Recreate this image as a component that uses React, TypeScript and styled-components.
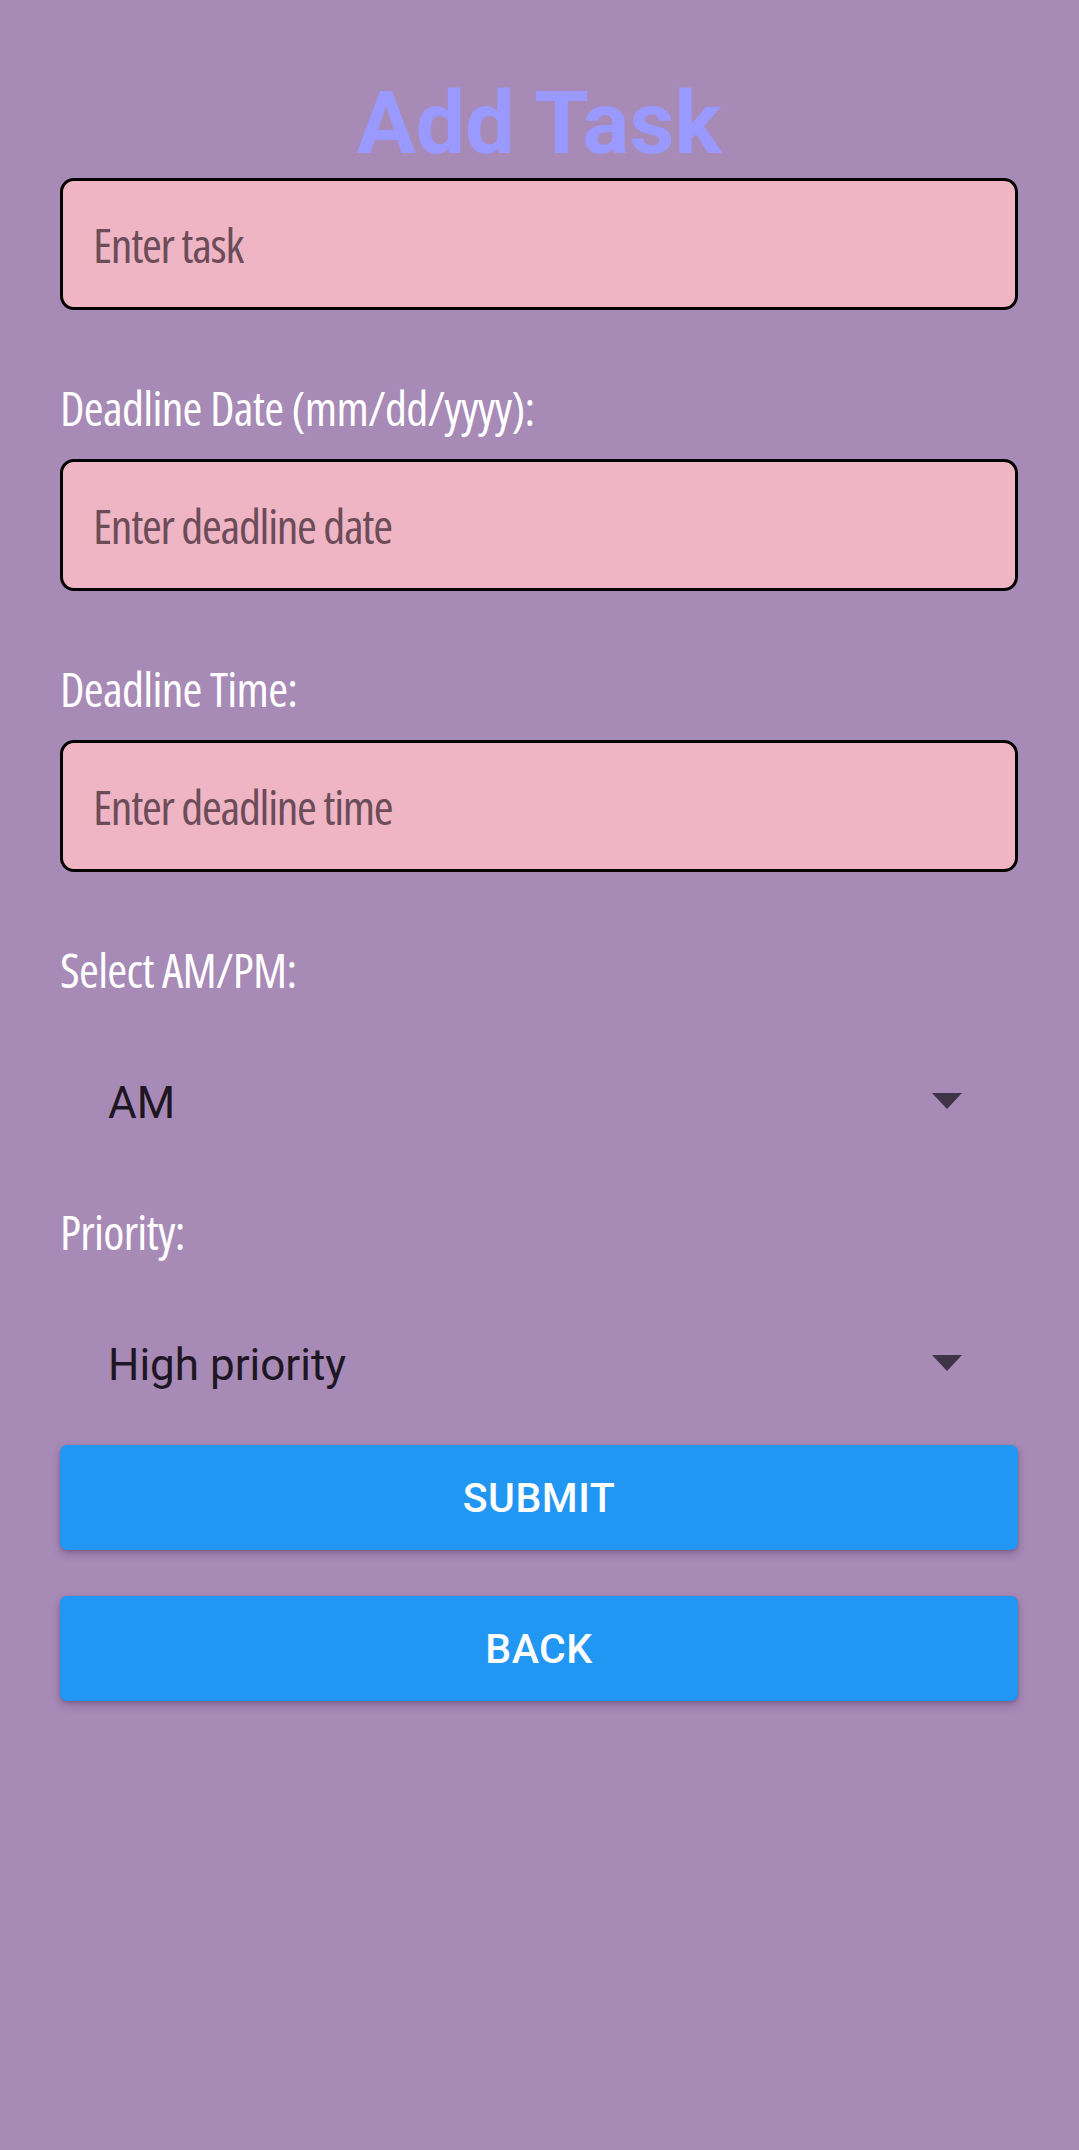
import React from "react";
import styled, { createGlobalStyle } from "styled-components";

const GlobalStyle = createGlobalStyle`
  html, body {
    margin: 0;
    padding: 0;
    background: #a78ab6;
  }
  body {
    min-height: 2150px;
    font-family: Roboto, "Liberation Sans", sans-serif;
  }
`;

const condensed = `"Open Sans", "Roboto Condensed", "DejaVu Sans Condensed", sans-serif`;

const Screen = styled.div`
  box-sizing: border-box;
  min-height: 2150px;
  background: #a78ab6;
  padding: 0 61px 0 60px;
  display: flex;
  flex-direction: column;
`;

const Title = styled.h1`
  margin: 79px 0 11px;
  font-family: Roboto, "Liberation Sans", sans-serif;
  font-weight: 700;
  font-size: 88px;
  line-height: 88px;
  color: #9999ff;
  text-align: center;
`;

const Field = styled.input`
  box-sizing: border-box;
  width: 100%;
  height: 132px;
  margin: 0;
  padding: 0 30px;
  border: 3px solid #000;
  border-radius: 14px;
  background: #efb5c5;
  font-family: ${condensed};
  font-stretch: 75%;
  font-size: 48px;
  letter-spacing: -1.3px;
  color: #3a2a32;
  outline: none;
  &::placeholder {
    color: #6b4c58;
    opacity: 1;
  }
`;

const Label = styled.label<{ $gap: number }>`
  display: block;
  margin: ${(p) => p.$gap}px 0 24px;
  font-family: ${condensed};
  font-stretch: 75%;
  font-weight: 500;
  font-size: 48px;
  letter-spacing: -0.7px;
  line-height: 54px;
  color: #ffffff;
`;

const Picker = styled.div`
  box-sizing: border-box;
  height: 150px;
  margin-top: 7px;
  padding: 0 56px 0 48px;
  display: flex;
  align-items: center;
  justify-content: space-between;
  cursor: pointer;
`;

const PickerValue = styled.span`
  font-family: Roboto, "Liberation Sans", sans-serif;
  font-size: 44px;
  color: #1e1623;
`;

const Caret = styled.svg`
  width: 30px;
  height: 16px;
  margin-top: -4px;
  fill: #3f3348;
`;

const Button = styled.button<{ $top: number }>`
  box-sizing: border-box;
  width: 100%;
  height: 105px;
  margin: ${(p) => p.$top}px 0 0;
  border: none;
  border-radius: 7px;
  background: #2196f3;
  color: #ffffff;
  font-family: Roboto, "Liberation Sans", sans-serif;
  font-weight: 500;
  font-size: 41px;
  letter-spacing: 0.5px;
  text-transform: uppercase;
  box-shadow: 0 4px 8px rgba(60, 30, 70, 0.3), 0 1px 3px rgba(60, 30, 70, 0.2);
  cursor: pointer;
`;

const Select: React.FC<{ value: string }> = ({ value }) => (
  <Picker role="combobox">
    <PickerValue>{value}</PickerValue>
    <Caret viewBox="0 0 30 16">
      <polygon points="0,0 30,0 15,16" />
    </Caret>
  </Picker>
);

export default function App() {
  return (
    <>
      <GlobalStyle />
      <Screen>
        <Title>Add Task</Title>
        <Field placeholder="Enter task" />
        <Label $gap={71}>Deadline Date (mm/dd/yyyy):</Label>
        <Field placeholder="Enter deadline date" />
        <Label $gap={71}>Deadline Time:</Label>
        <Field placeholder="Enter deadline time" />
        <Label $gap={71}>Select AM/PM:</Label>
        <Select value="AM" />
        <Label $gap={27}>Priority:</Label>
        <Select value="High priority" />
        <Button $top={5}>Submit</Button>
        <Button $top={46}>Back</Button>
      </Screen>
    </>
  );
}
